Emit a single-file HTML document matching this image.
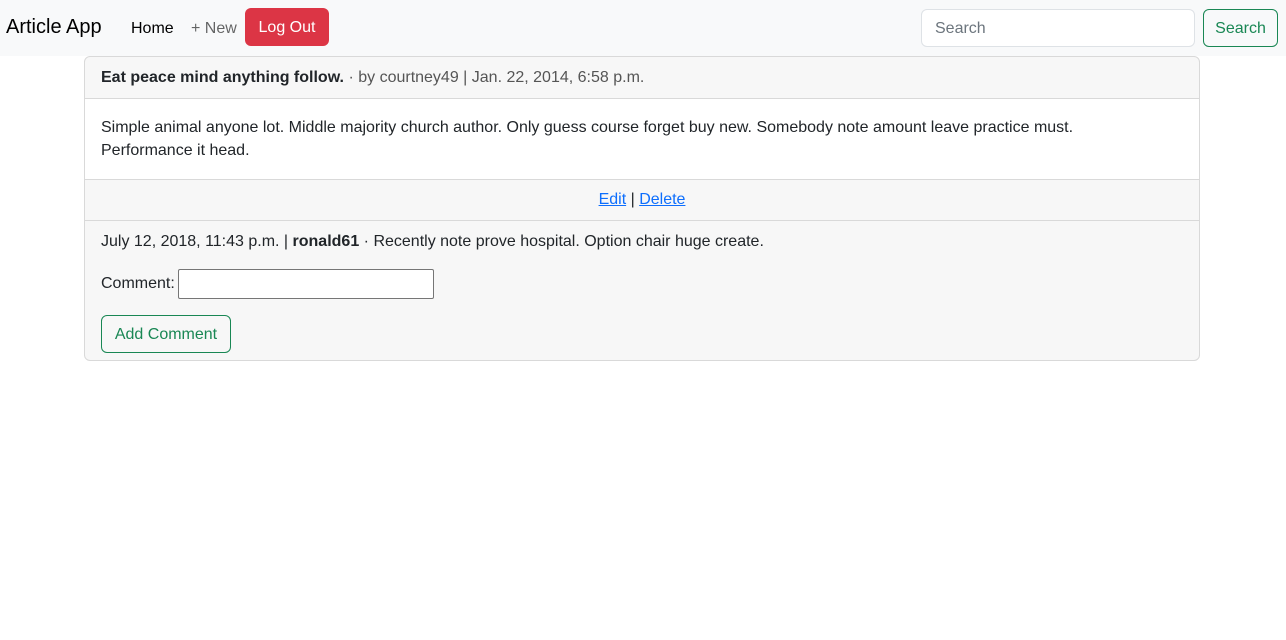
<!DOCTYPE html>
<html><head><meta charset="utf-8"><style>
*{box-sizing:border-box;margin:0;padding:0}
body{width:1286px;height:640px;background:#fff;font-family:"Liberation Sans",sans-serif;font-size:16px;color:#212529;position:relative;overflow:hidden}
.nav{position:absolute;left:0;top:0;width:1286px;height:56px;background:#f8f9fa}
.abs{position:absolute;white-space:nowrap}
.brand{left:6px;top:16px;font-size:20px;color:#000}
.home{left:131px;top:20px;color:#000;font-size:16px}
.new{left:191px;top:20px;color:rgba(0,0,0,.6)}
.logout{left:245px;top:8px;width:84px;height:38px;background:#dc3545;color:#fff;border-radius:6px;text-align:center;line-height:40px}
.search{left:921px;top:9px;width:274px;height:38px;border:1px solid #dee2e6;border-radius:6px;background:#fff;padding-left:13px;line-height:38px;color:#6c757d}
.sbtn{left:1203px;top:9px;width:75px;height:38px;border:1px solid #198754;border-radius:6px;color:#198754;text-align:center;line-height:38px}
.card{position:absolute;left:84px;top:56px;width:1116px;height:305px;border:1px solid #d9d9d9;border-radius:6px;overflow:hidden;background:#f7f7f7}
.hdr{height:42px;border-bottom:1px solid #d9d9d9;padding:12px 16px 0;color:#555}
.hdr b{color:#212529}
.bd{background:#fff;height:81px;border-bottom:1px solid #d9d9d9;padding:17px 16px 0;line-height:23px}
.ft{height:41px;border-bottom:1px solid #d9d9d9;text-align:center;padding-top:11px}
.ft a{color:#0d6efd;text-decoration:underline}
.cm{padding:12px 16px 0}
.inp{display:inline-block;width:256px;height:30px;border:1px solid #767676;border-radius:2px;background:#fff;vertical-align:middle;margin-left:3px}
.add{display:inline-block;margin-top:16px;width:130px;height:38px;border:1px solid #198754;border-radius:6px;color:#198754;text-align:center;line-height:38px}
</style></head><body>
<div class="nav">
<div class="abs brand">Article App</div>
<div class="abs home">Home</div>
<div class="abs new">+ New</div>
<div class="abs logout">Log Out</div>
<div class="abs search">Search</div>
<div class="abs sbtn">Search</div>
</div>
<div class="card">
<div class="hdr"><b>Eat peace mind anything follow.</b> · by courtney49 | Jan. 22, 2014, 6:58 p.m.</div>
<div class="bd">Simple animal anyone lot. Middle majority church author. Only guess course forget buy new. Somebody note amount leave practice must.<br>Performance it head.</div>
<div class="ft"><a>Edit</a> | <a>Delete</a></div>
<div class="cm">
<div>July 12, 2018, 11:43 p.m. | <b>ronald61</b> · Recently note prove hospital. Option chair huge create.</div>
<div style="margin-top:18px">Comment:<span class="inp"></span></div>
<div class="add">Add Comment</div>
</div>
</div>
</body></html>
